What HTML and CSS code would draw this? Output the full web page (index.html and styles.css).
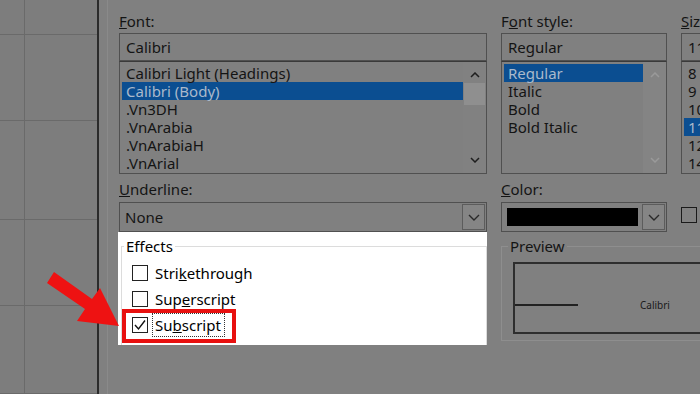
FILE: index.html
```html
<!DOCTYPE html>
<html lang="en">
<head>
  <meta charset="UTF-8" />
  <title>Font</title>
  <link rel="stylesheet" href="styles.css">
</head>
<body>
  <div class="screen">
    <div class="sheet">
      <div class="cell"></div><div class="cell"></div>
      <div class="cell"></div><div class="cell"></div>
      <div class="cell"></div><div class="cell"></div>
      <div class="cell"></div><div class="cell"></div>
      <div class="cell"></div><div class="cell"></div>
    </div>
    <div class="frame"></div>

    <div class="dialog">
      <!-- row 1: labels -->
      <div class="lbl"><u>F</u>ont:</div>
      <div class="lbl">F<u>o</u>nt style:</div>
      <div class="lbl"><u>S</u>ize:</div>

      <!-- row 2: text boxes -->
      <div class="field">Calibri</div>
      <div class="field">Regular</div>
      <div class="field">11</div>

      <!-- row 3: lists -->
      <div class="list">
        <ul class="items">
          <li>Calibri Light (Headings)</li>
          <li class="sel">Calibri (Body)</li>
          <li>.Vn3DH</li>
          <li>.VnArabia</li>
          <li>.VnArabiaH</li>
          <li>.VnArial</li>
        </ul>
        <div class="scroll">
          <svg class="arr" width="10" height="6" viewBox="0 0 10 6"><polyline points="1,5 5,1 9,5" /></svg>
          <div class="thumb"></div>
          <div class="track"></div>
          <svg class="arr" width="10" height="6" viewBox="0 0 10 6"><polyline points="1,1 5,5 9,1" /></svg>
        </div>
      </div>
      <div class="list">
        <ul class="items">
          <li class="sel">Regular</li>
          <li>Italic</li>
          <li>Bold</li>
          <li>Bold Italic</li>
        </ul>
        <div class="scroll off">
          <svg class="arr" width="10" height="6" viewBox="0 0 10 6"><polyline points="1,5 5,1 9,5" /></svg>
          <div class="track"></div>
          <svg class="arr" width="10" height="6" viewBox="0 0 10 6"><polyline points="1,1 5,5 9,1" /></svg>
        </div>
      </div>
      <div class="list">
        <ul class="items sizes">
          <li>8</li>
          <li>9</li>
          <li>10</li>
          <li class="sel">11</li>
          <li>12</li>
          <li>14</li>
        </ul>
      </div>

      <!-- row 4: labels -->
      <div class="lbl low"><u>U</u>nderline:</div>
      <div class="lbl low"><u>C</u>olor:</div>
      <div class="lbl low"></div>

      <!-- row 5: combos -->
      <div class="combo">
        <span class="value">None</span>
        <span class="drop"><svg width="12" height="7" viewBox="0 0 12 7"><polyline points="1,1 6,6 11,1" /></svg></span>
      </div>
      <div class="combo">
        <span class="swatch"></span>
        <span class="drop"><svg width="12" height="7" viewBox="0 0 12 7"><polyline points="1,1 6,6 11,1" /></svg></span>
      </div>
      <div class="side">
        <span class="box dim"></span>
      </div>

      <!-- row 6: effects + preview -->
      <div class="effects">
        <fieldset class="group">
          <legend>Effects</legend>
          <div class="check"><span class="box"></span><span>Stri<u>k</u>ethrough</span></div>
          <div class="check"><span class="box"></span><span>Sup<u>e</u>rscript</span></div>
          <div class="check"><span class="box"><svg width="14" height="14" viewBox="0 0 14 14"><polyline points="2,7 5.5,11 12,2.5" /></svg></span><span class="focus">Su<u>b</u>script</span></div>
        </fieldset>
        <div class="mark"></div>
      </div>
      <fieldset class="preview">
        <legend>Preview</legend>
        <div class="sample">
          <span class="base"></span>
          <span class="word">Calibri</span>
        </div>
      </fieldset>
    </div>

    <svg class="arrow" width="130" height="340" viewBox="0 0 130 340">
      <polygon points="54,272 92,299 100,288 119,326 77,321 85,309 47,283" />
    </svg>
  </div>
</body>
</html>
```

FILE: styles.css
```css
body {
  margin: 0;
  width: 700px;
  height: 394px;
  overflow: hidden;
  background: #808080;
  font-family: "Noto Sans", sans-serif;
  color: #141414;
}
.screen {
  position: relative;
  display: flex;
  height: 394px;
}
.sheet {
  width: 97px;
  flex-shrink: 0;
  display: grid;
  grid-template-columns: 25px 72px;
  grid-template-rows: 35px 86px 99px 86px 1fr;
  background: #7d7d7d;
}
.cell {
  border-bottom: 1px solid #6a6a6a;
}
.cell:nth-child(odd) {
  border-right: 1px solid #6a6a6a;
}
.frame {
  width: 2px;
  flex-shrink: 0;
  background: #2b2b2b;
}
.dialog {
  flex-shrink: 0;
  display: grid;
  grid-template-columns: 368px 166px 80px;
  grid-template-rows: 21px 28px 113px 28px 30px 113px;
  column-gap: 14px;
  padding: 12px 0 0 20px;
  box-shadow: inset 8px 0 0 #808080, inset 9px 0 0 #8a8a8a;
}
.lbl {
  font-size: 15px;
  line-height: 18px;
}
.lbl.low {
  align-self: end;
  padding-bottom: 4px;
}
.field {
  border: 1px solid #505050;
  font-size: 15px;
  line-height: 26px;
  padding-left: 6px;
  white-space: nowrap;
  overflow: hidden;
}
.list {
  display: flex;
  border: 1px solid #505050;
  border-top-color: #3a3a3a;
  overflow: hidden;
}
.items {
  flex: 1;
  list-style: none;
  margin: 0;
  padding: 2px 0 0 2px;
  font-size: 15px;
  line-height: 18px;
}
.items li {
  height: 18px;
  padding-left: 4px;
  white-space: nowrap;
}
.items li.sel {
  background: #0b4e91;
  color: #a9b9cb;
}
.scroll {
  width: 23px;
  display: flex;
  flex-direction: column;
  align-items: center;
  background: #818181;
}
.scroll .arr {
  margin: 10px 0;
  fill: none;
  stroke: #1e1e1e;
  stroke-width: 1.5;
}
.scroll.off {
  background: #848484;
}
.scroll.off .arr {
  stroke: #9a9a9a;
}
.thumb {
  width: 21px;
  height: 22px;
  background: #8f8f8f;
  margin-top: -5px;
}
.track {
  flex: 1;
}
.combo {
  display: flex;
  align-items: stretch;
  border: 1px solid #505050;
  padding: 1px;
}
.combo .value {
  flex: 1;
  font-size: 15px;
  line-height: 26px;
  padding-left: 4px;
}
.swatch {
  flex: 1;
  margin: 4px;
  background: #000;
}
.drop {
  width: 21px;
  display: flex;
  align-items: center;
  justify-content: center;
  border: 1px solid #5c5c5c;
  background: #858585;
}
.drop svg {
  fill: none;
  stroke: #2a2a2a;
  stroke-width: 1.4;
}
.side {
  padding-top: 4px;
}
.box {
  display: inline-flex;
  align-items: center;
  justify-content: center;
  width: 14px;
  height: 14px;
  border: 1px solid #222;
  background: #fff;
  flex-shrink: 0;
}
.box.dim {
  background: #818181;
  border-color: #1a1a1a;
}
.box svg {
  fill: none;
  stroke: #111;
  stroke-width: 1.4;
}
.effects {
  position: relative;
  margin-left: -1px;
  background: #fff;
  color: #000;
  padding: 4px 0 0 3px;
}
.group {
  margin: 0;
  height: 100%;
  box-sizing: border-box;
  border: 1px solid #dcdcdc;
  border-bottom: none;
  padding: 4px 0 0 10px;
}
.group legend {
  font-size: 15px;
  padding: 0 2px;
  margin-left: -8px;
}
.check {
  display: flex;
  align-items: center;
  gap: 7px;
  height: 26px;
  font-size: 15px;
}
.focus {
  outline: 1px dotted #333;
  padding: 1px 3px 1px 2px;
  margin-left: -2px;
}
.mark {
  position: absolute;
  left: 4px;
  top: 77px;
  width: 106px;
  height: 26px;
  border: 4px solid #e8100f;
}
.preview {
  grid-column: 2 / span 2;
  margin: 4px 0 0 0;
  height: 105px;
  box-sizing: border-box;
  border: 1px solid #8e8e8e;
  border-right: none;
  padding: 0 0 0 11px;
}
.preview legend {
  font-size: 15px;
  padding: 0 2px;
  margin-left: -5px;
}
.sample {
  display: flex;
  align-items: center;
  height: 72px;
  margin-top: 6px;
  border: 2px solid #2e2e2e;
  border-right: none;
  padding-top: 13px;
  box-sizing: border-box;
}
.base {
  width: 63px;
  height: 2px;
  background: #222;
}
.word {
  margin-left: 62px;
  font-size: 10px;
  color: #1a1a1a;
}
.arrow {
  position: absolute;
  left: 0;
  top: 0;
  fill: #ee1212;
}
```
